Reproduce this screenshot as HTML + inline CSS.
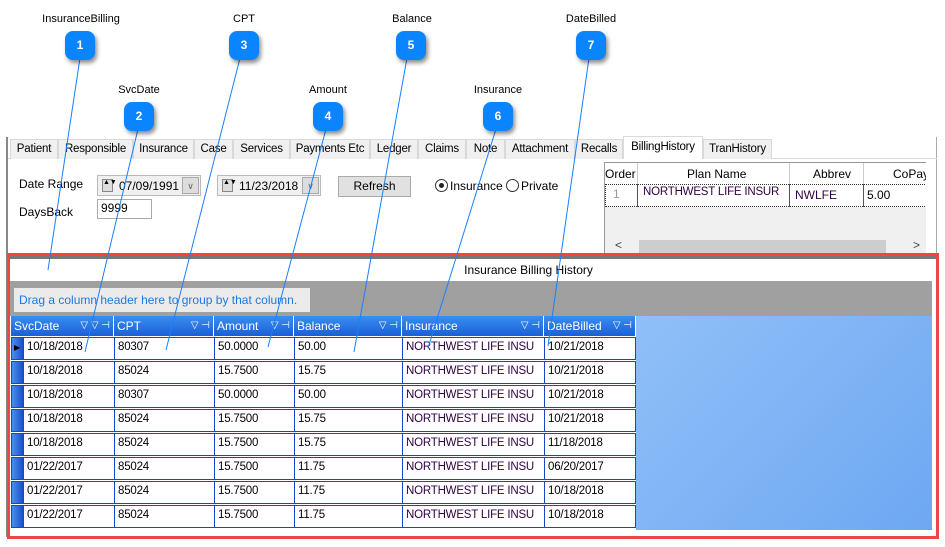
<!DOCTYPE html>
<html><head><style>
*{margin:0;padding:0;box-sizing:border-box}
body{width:945px;height:547px;background:#fff;position:relative;overflow:hidden;font-family:"Liberation Sans",sans-serif;font-size:12px;color:#000}
.a{position:absolute}
.lbl{position:absolute;font-size:11px;transform:translateX(-50%);white-space:nowrap}
.bd{position:absolute;width:30px;height:29px;border-radius:8px;background:#0a84ff;color:#fff;font-weight:bold;font-size:12px;text-align:center;line-height:29px;box-shadow:2px 3px 4px rgba(0,0,0,.45)}
.tab{position:absolute;top:139px;height:20px;border:1px solid #d9d9d9;border-bottom:none;background:#f0f0f0;line-height:18px;text-align:center;font-size:11.5px;letter-spacing:-0.2px;white-space:nowrap;overflow:hidden}
.hd{position:absolute;top:316px;height:20px;background:linear-gradient(#3a8ef0,#1a5fd8);color:#fff;border-right:1px solid #fff;line-height:20px;padding-left:3px;font-size:12px}
.hd i{position:absolute;right:3px;top:0;font-style:normal;font-size:10px}
.row{position:absolute;left:11px;width:625px;height:23px;border:1px solid #1a45c8;background:#fff}
.c{position:absolute;top:0;height:21px;border-left:1px solid #1a45c8;padding-left:3px;line-height:18px;font-size:11.5px;letter-spacing:-0.2px;white-space:nowrap}
.sel{position:absolute;left:0;top:0;width:11px;height:21px;background:linear-gradient(90deg,#4a8ef0,#1a4fc8)}
</style></head><body>

<div class="lbl" style="left:81px;top:13px">InsuranceBilling</div>
<div class="lbl" style="left:244px;top:13px">CPT</div>
<div class="lbl" style="left:412px;top:13px">Balance</div>
<div class="lbl" style="left:591px;top:13px">DateBilled</div>
<div class="lbl" style="left:139px;top:84px">SvcDate</div>
<div class="lbl" style="left:328px;top:84px">Amount</div>
<div class="lbl" style="left:498px;top:84px">Insurance</div>

<div class="a" style="left:6px;top:137px;width:931px;height:400px;border-left:2px solid #888;border-right:1px solid #aaa;background:#fff"></div>
<div class="a" style="left:8px;top:158px;width:929px;height:1px;background:#d9d9d9"></div>
<div class="tab" style="left:10px;width:48px">Patient</div>
<div class="tab" style="left:58px;width:75px">Responsible</div>
<div class="tab" style="left:133px;width:61px">Insurance</div>
<div class="tab" style="left:194px;width:39px">Case</div>
<div class="tab" style="left:233px;width:57px">Services</div>
<div class="tab" style="left:290px;width:80px">Payments Etc</div>
<div class="tab" style="left:370px;width:48px">Ledger</div>
<div class="tab" style="left:418px;width:48px">Claims</div>
<div class="tab" style="left:466px;width:39px">Note</div>
<div class="tab" style="left:505px;width:70px">Attachment</div>
<div class="tab" style="left:575px;width:48px">Recalls</div>
<div class="tab" style="left:623px;width:80px;top:136px;height:23px;background:#fff;line-height:20px">BillingHistory</div>
<div class="tab" style="left:703px;width:69px">TranHistory</div>

<div class="a" style="left:19px;top:177px">Date Range</div>
<div class="a" style="left:19px;top:205px">DaysBack</div>
<div class="a" style="left:97px;top:175px;width:104px;height:21px;border:1px solid #bbb;background:#f0f0f0"><div class="a" style="left:4px;top:3px;width:11px;height:13px;border:1px solid #888;background:#ddd;font-size:7px;line-height:6px;text-align:center">▲▼</div><span class="a" style="left:21px;top:3px">07/09/1991</span><div class="a" style="left:84px;top:1px;width:17px;height:17px;border:1px solid #aaa;background:#ddd;text-align:center;font-size:9px;color:#666;line-height:16px">∨</div></div>
<div class="a" style="left:217px;top:175px;width:104px;height:21px;border:1px solid #bbb;background:#f0f0f0"><div class="a" style="left:4px;top:3px;width:11px;height:13px;border:1px solid #888;background:#ddd;font-size:7px;line-height:6px;text-align:center">▲▼</div><span class="a" style="left:21px;top:3px">11/23/2018</span><div class="a" style="left:84px;top:1px;width:17px;height:17px;border:1px solid #aaa;background:#ddd;text-align:center;font-size:9px;color:#666;line-height:16px">∨</div></div>
<div class="a" style="left:97px;top:199px;width:55px;height:20px;border:1px solid #aaa;padding:1px 3px">9999</div>
<div class="a" style="left:338px;top:176px;width:73px;height:21px;border:1px solid #aaa;background:#e1e1e1;text-align:center;line-height:19px">Refresh</div>
<div class="a" style="left:435px;top:179px;width:13px;height:13px;border:1px solid #333;border-radius:50%"><div class="a" style="left:3px;top:3px;width:5px;height:5px;border-radius:50%;background:#222"></div></div>
<div class="a" style="left:450px;top:179px">Insurance</div>
<div class="a" style="left:506px;top:179px;width:13px;height:13px;border:1px solid #333;border-radius:50%"></div>
<div class="a" style="left:521px;top:179px">Private</div>

<div class="a" style="left:604px;top:162px;width:322px;height:91px;background:#f0f0f0;border-left:1px solid #999;border-top:1px solid #999;overflow:hidden">
 <div class="a" style="left:0;top:0;width:322px;height:21px;background:#fff"></div>
 <div class="a" style="left:0;top:4px">Order</div>
 <div class="a" style="left:32px;top:0;width:1px;height:43px;background:#ccc"></div>
 <div class="a" style="left:82px;top:4px">Plan Name</div>
 <div class="a" style="left:184px;top:0;width:1px;height:43px;background:#ccc"></div>
 <div class="a" style="left:208px;top:4px">Abbrev</div>
 <div class="a" style="left:258px;top:0;width:1px;height:43px;background:#ccc"></div>
 <div class="a" style="left:288px;top:4px">CoPay</div>
 <div class="a" style="left:0;top:21px;width:322px;height:23px;background:#fff;border:1px dotted #333"></div>
 <div class="a" style="left:32px;top:21px;width:1px;height:23px;background:#555"></div>
 <div class="a" style="left:184px;top:21px;width:1px;height:23px;background:#555"></div>
 <div class="a" style="left:258px;top:21px;width:1px;height:23px;background:#555"></div>
 <div class="a" style="left:8px;top:24px;color:#999">1</div>
 <div class="a" style="left:38px;top:23px;color:#300040;font-size:11.5px;letter-spacing:-0.2px">NORTHWEST LIFE INSUR</div>
 <div class="a" style="left:190px;top:25px;color:#300040">NWLFE</div>
 <div class="a" style="left:262px;top:25px">5.00</div>
 <div class="a" style="left:34px;top:77px;width:247px;height:13px;background:#cdcdcd"></div>
 <div class="a" style="left:10px;top:75px;font-size:12px;color:#444">&lt;</div>
 <div class="a" style="left:308px;top:75px;font-size:12px;color:#444">&gt;</div>
</div>

<div class="a" style="left:7px;top:253px;width:932px;height:286px;border:3px solid #f04545;background:#fff"></div>
<div class="a" style="left:10px;top:256px;width:926px;height:3px;background:#777"></div>
<div class="a" style="left:10px;top:259px;width:922px;height:22px;background:#fff;text-align:center;line-height:22px;padding-left:115px">Insurance Billing History</div>
<div class="a" style="left:10px;top:281px;width:922px;height:35px;background:#a0a0a0"></div>
<div class="a" style="left:14px;top:288px;width:296px;height:24px;background:#ebebeb;color:#1e78e0;line-height:24px;padding-left:5px">Drag a column header here to group by that column.</div>
<div class="a" style="left:10px;top:316px;width:922px;height:214px;background:linear-gradient(135deg,#b8dcff,#6ea8f2)"></div>
<div class="a" style="left:10px;top:316px;width:626px;height:214px;background:#fff"></div>
<div class="hd" style="left:11px;width:103px">SvcDate<i>▽ ▽ ⊣</i></div>
<div class="hd" style="left:114px;width:100px">CPT<i>▽ ⊣</i></div>
<div class="hd" style="left:214px;width:80px">Amount<i>▽ ⊣</i></div>
<div class="hd" style="left:294px;width:108px">Balance<i>▽ ⊣</i></div>
<div class="hd" style="left:402px;width:142px">Insurance<i>▽ ⊣</i></div>
<div class="hd" style="left:544px;width:92px">DateBilled<i>▽ ⊣</i></div>

<div class="row" style="top:337px"><div class="sel"></div><span class="a" style="left:2px;top:5px;font-size:8px">▶</span><div class="c" style="left:11px">10/18/2018</div><div class="c" style="left:102px">80307</div><div class="c" style="left:202px">50.0000</div><div class="c" style="left:282px">50.00</div><div class="c" style="left:390px;color:#300040">NORTHWEST LIFE INSU</div><div class="c" style="left:532px">10/21/2018</div></div>
<div class="row" style="top:361px"><div class="sel"></div><div class="c" style="left:11px">10/18/2018</div><div class="c" style="left:102px">85024</div><div class="c" style="left:202px">15.7500</div><div class="c" style="left:282px">15.75</div><div class="c" style="left:390px;color:#300040">NORTHWEST LIFE INSU</div><div class="c" style="left:532px">10/21/2018</div></div>
<div class="row" style="top:385px"><div class="sel"></div><div class="c" style="left:11px">10/18/2018</div><div class="c" style="left:102px">80307</div><div class="c" style="left:202px">50.0000</div><div class="c" style="left:282px">50.00</div><div class="c" style="left:390px;color:#300040">NORTHWEST LIFE INSU</div><div class="c" style="left:532px">10/21/2018</div></div>
<div class="row" style="top:409px"><div class="sel"></div><div class="c" style="left:11px">10/18/2018</div><div class="c" style="left:102px">85024</div><div class="c" style="left:202px">15.7500</div><div class="c" style="left:282px">15.75</div><div class="c" style="left:390px;color:#300040">NORTHWEST LIFE INSU</div><div class="c" style="left:532px">10/21/2018</div></div>
<div class="row" style="top:433px"><div class="sel"></div><div class="c" style="left:11px">10/18/2018</div><div class="c" style="left:102px">85024</div><div class="c" style="left:202px">15.7500</div><div class="c" style="left:282px">15.75</div><div class="c" style="left:390px;color:#300040">NORTHWEST LIFE INSU</div><div class="c" style="left:532px">11/18/2018</div></div>
<div class="row" style="top:457px"><div class="sel"></div><div class="c" style="left:11px">01/22/2017</div><div class="c" style="left:102px">85024</div><div class="c" style="left:202px">15.7500</div><div class="c" style="left:282px">11.75</div><div class="c" style="left:390px;color:#300040">NORTHWEST LIFE INSU</div><div class="c" style="left:532px">06/20/2017</div></div>
<div class="row" style="top:481px"><div class="sel"></div><div class="c" style="left:11px">01/22/2017</div><div class="c" style="left:102px">85024</div><div class="c" style="left:202px">15.7500</div><div class="c" style="left:282px">11.75</div><div class="c" style="left:390px;color:#300040">NORTHWEST LIFE INSU</div><div class="c" style="left:532px">10/18/2018</div></div>
<div class="row" style="top:505px"><div class="sel"></div><div class="c" style="left:11px">01/22/2017</div><div class="c" style="left:102px">85024</div><div class="c" style="left:202px">15.7500</div><div class="c" style="left:282px">11.75</div><div class="c" style="left:390px;color:#300040">NORTHWEST LIFE INSU</div><div class="c" style="left:532px">10/18/2018</div></div>

<svg class="a" style="left:0;top:0" width="945" height="547">
<g stroke="#1a7fff" stroke-width="1" fill="none">
<line x1="80" y1="58" x2="48" y2="270"/>
<line x1="138" y1="129" x2="85" y2="352"/>
<line x1="240" y1="58" x2="166" y2="350"/>
<line x1="326" y1="129" x2="268" y2="347"/>
<line x1="407" y1="58" x2="354" y2="352"/>
<line x1="496" y1="129" x2="428" y2="348"/>
<line x1="589" y1="58" x2="548" y2="346"/>
</g></svg>

<div class="bd" style="left:65px;top:31px">1</div>
<div class="bd" style="left:229px;top:31px">3</div>
<div class="bd" style="left:396px;top:31px">5</div>
<div class="bd" style="left:576px;top:31px">7</div>
<div class="bd" style="left:124px;top:102px">2</div>
<div class="bd" style="left:313px;top:102px">4</div>
<div class="bd" style="left:483px;top:102px">6</div>
</body></html>
